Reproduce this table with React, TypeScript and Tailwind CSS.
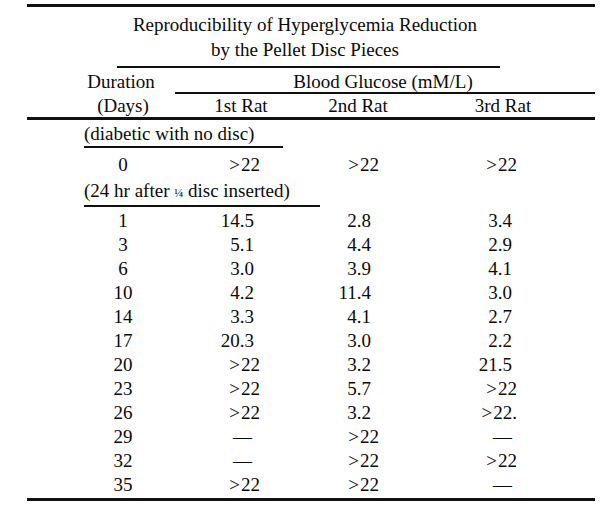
import React from "react";

type Cell = string;
const rows: [string, Cell, Cell, Cell][] = [
  ["1", "14.5", "2.8", "3.4"],
  ["3", "5.1", "4.4", "2.9"],
  ["6", "3.0", "3.9", "4.1"],
  ["10", "4.2", "11.4", "3.0"],
  ["14", "3.3", "4.1", "2.7"],
  ["17", "20.3", "3.0", "2.2"],
  ["20", ">22", "3.2", "21.5"],
  ["23", ">22", "5.7", ">22"],
  ["26", ">22", "3.2", ">22."],
  ["29", "—", ">22", "—"],
  ["32", "—", ">22", ">22"],
  ["35", ">22", ">22", "—"],
];

function Val({ v, col }: { v: string; col: number }) {
  if (v.startsWith(">")) {
    const mr = col === 1 ? "mr-[-6px]" : col === 2 ? "mr-[-8px]" : "mr-[-5px]";
    return (
      <span className={`inline-block ${mr}`}>
        <span className="mr-[1px]">&gt;</span>
        {v.slice(1)}
      </span>
    );
  }
  if (v === "—") {
    return <span className={col === 1 ? "inline-block mr-[2px]" : "inline-block"}>—</span>;
  }
  return <span>{v}</span>;
}

function DataRow({ r }: { r: [string, Cell, Cell, Cell] }) {
  return (
    <div className="grid grid-cols-[160px_51px_117px_141px] pl-[16px] h-[24px] leading-[24px]">
      <div className="text-center">{r[0]}</div>
      <div className="text-right whitespace-nowrap">
        <Val v={r[1]} col={1} />
      </div>
      <div className="text-right whitespace-nowrap">
        <Val v={r[2]} col={2} />
      </div>
      <div className="text-right whitespace-nowrap">
        <Val v={r[3]} col={3} />
      </div>
    </div>
  );
}

export default function App() {
  return (
    <div
      className="w-[604px] h-[526px] bg-white text-[#0a0a0a] text-[19px]"
      style={{ fontFamily: '"Liberation Serif", "Times New Roman", serif' }}
    >
      <div className="ml-[27px] w-[568px] pt-[4px]">
        <div className="h-[3px] bg-[#111]" />
        <div className="mt-[5px] pr-[12px] text-center leading-[25px]">
          <div>Reproducibility of Hyperglycemia Reduction</div>
          <div>by the Pellet Disc Pieces</div>
        </div>
        <div className="mt-[4px] ml-[90px] w-[383px] h-[2px] bg-[#111]" />
        <div className="mt-[2px] flex h-[24px] leading-[24px]">
          <div className="w-[148px] pl-[40px] text-center">Duration</div>
          <div className="w-[420px] text-center border-b-2 border-[#111] pr-[4px]">
            Blood Glucose (mM/L)
          </div>
        </div>
        <div className="grid grid-cols-[160px_76px_158px_132px] pl-[16px] h-[23px] leading-[23px]">
          <div className="text-center">(Days)</div>
          <div className="text-center whitespace-nowrap">1st Rat</div>
          <div className="text-center whitespace-nowrap">2nd Rat</div>
          <div className="text-center whitespace-nowrap">3rd Rat</div>
        </div>
        <div className="h-[3px] bg-[#111]" />
        <div className="ml-[57px]">
          <div className="inline-block w-[199px] leading-[24px] border-b-2 border-[#111]">
            (diabetic with no disc)
          </div>
        </div>
        <div className="mt-[4px]">
          <DataRow r={["0", ">22", ">22", ">22"]} />
        </div>
        <div className="ml-[57px]">
          <div className="inline-block w-[236px] leading-[24px] border-b-2 border-[#111] whitespace-nowrap">
            (24 hr after <span className="text-[12px]">¼</span> disc inserted)
          </div>
        </div>
        <div className="mt-[2px]">
          {rows.map((r) => (
            <DataRow key={r[0]} r={r} />
          ))}
        </div>
        <div className="mt-[1px] h-[3px] bg-[#111]" />
      </div>
    </div>
  );
}
